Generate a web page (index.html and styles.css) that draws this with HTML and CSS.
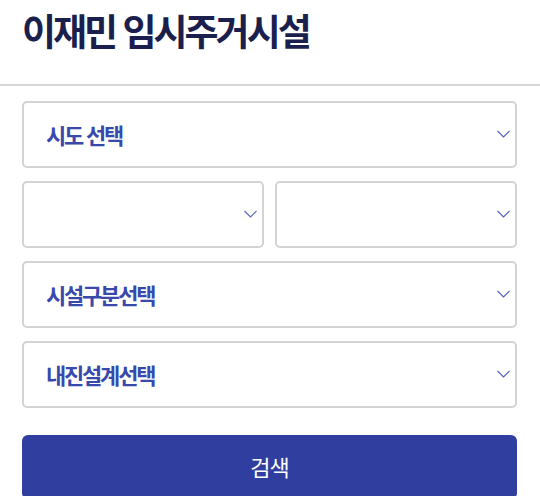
FILE: index.html
```html
<!DOCTYPE html>
<html lang="ko">
<head>
<meta charset="utf-8">
<link rel="stylesheet" href="styles.css">
</head>
<body>
<header class="header">
  <h1 class="title">이재민 임시주거시설</h1>
</header>
<main class="form">
  <div class="select">
    <span class="label">시도 선택</span>
    <svg class="chev" width="13" height="8" viewBox="0 0 13 8"><path d="M0.5 1 L6.5 7 L12.5 1" fill="none" stroke="#5563b8" stroke-width="1.1"/></svg>
  </div>
  <div class="row">
    <div class="select">
      <span class="label"></span>
      <svg class="chev" width="13" height="8" viewBox="0 0 13 8"><path d="M0.5 1 L6.5 7 L12.5 1" fill="none" stroke="#5563b8" stroke-width="1.1"/></svg>
    </div>
    <div class="select">
      <span class="label"></span>
      <svg class="chev" width="13" height="8" viewBox="0 0 13 8"><path d="M0.5 1 L6.5 7 L12.5 1" fill="none" stroke="#5563b8" stroke-width="1.1"/></svg>
    </div>
  </div>
  <div class="select">
    <span class="label">시설구분선택</span>
    <svg class="chev" width="13" height="8" viewBox="0 0 13 8"><path d="M0.5 1 L6.5 7 L12.5 1" fill="none" stroke="#5563b8" stroke-width="1.1"/></svg>
  </div>
  <div class="select">
    <span class="label">내진설계선택</span>
    <svg class="chev" width="13" height="8" viewBox="0 0 13 8"><path d="M0.5 1 L6.5 7 L12.5 1" fill="none" stroke="#5563b8" stroke-width="1.1"/></svg>
  </div>
  <button class="search">검색</button>
</main>
</body>
</html>
```

FILE: styles.css
```css
* { box-sizing: border-box; }
html, body { margin: 0; padding: 0; background: #fff; }
body {
  font-family: "Noto Sans CJK KR", "Noto Sans", sans-serif;
  width: 540px;
  height: 496px;
  overflow: hidden;
}
.header {
  height: 86px;
  border-bottom: 2px solid #d6d6d6;
  padding: 0 22px;
  display: flex;
  align-items: center;
}
.title {
  margin: 0;
  font-size: 37px;
  font-weight: 700;
  letter-spacing: -3px;
  color: #1b1f4d;
  line-height: 1;
  position: relative;
  top: -12px;
}
.form {
  padding: 15px 23px 0 22px;
  display: flex;
  flex-direction: column;
  gap: 13px;
}
.row {
  display: flex;
  gap: 11px;
}
.row .select { flex: 1; }
.select {
  height: 67px;
  border: 2px solid #d3d3d3;
  border-radius: 5px;
  display: flex;
  align-items: center;
  justify-content: space-between;
  padding: 0 5px 2px 22px;
}
.label {
  font-size: 22px;
  font-weight: 700;
  letter-spacing: -2.2px;
  color: #3949ab;
}
.chev { display: block; }
.search {
  margin-top: 14px;
  height: 64px;
  border: none;
  border-radius: 6px;
  background: #303f9f;
  color: #fff;
  font-family: "Noto Sans CJK KR", sans-serif;
  font-size: 22px;
  letter-spacing: -1px;
  padding: 0 0 2px 0;
}
```
